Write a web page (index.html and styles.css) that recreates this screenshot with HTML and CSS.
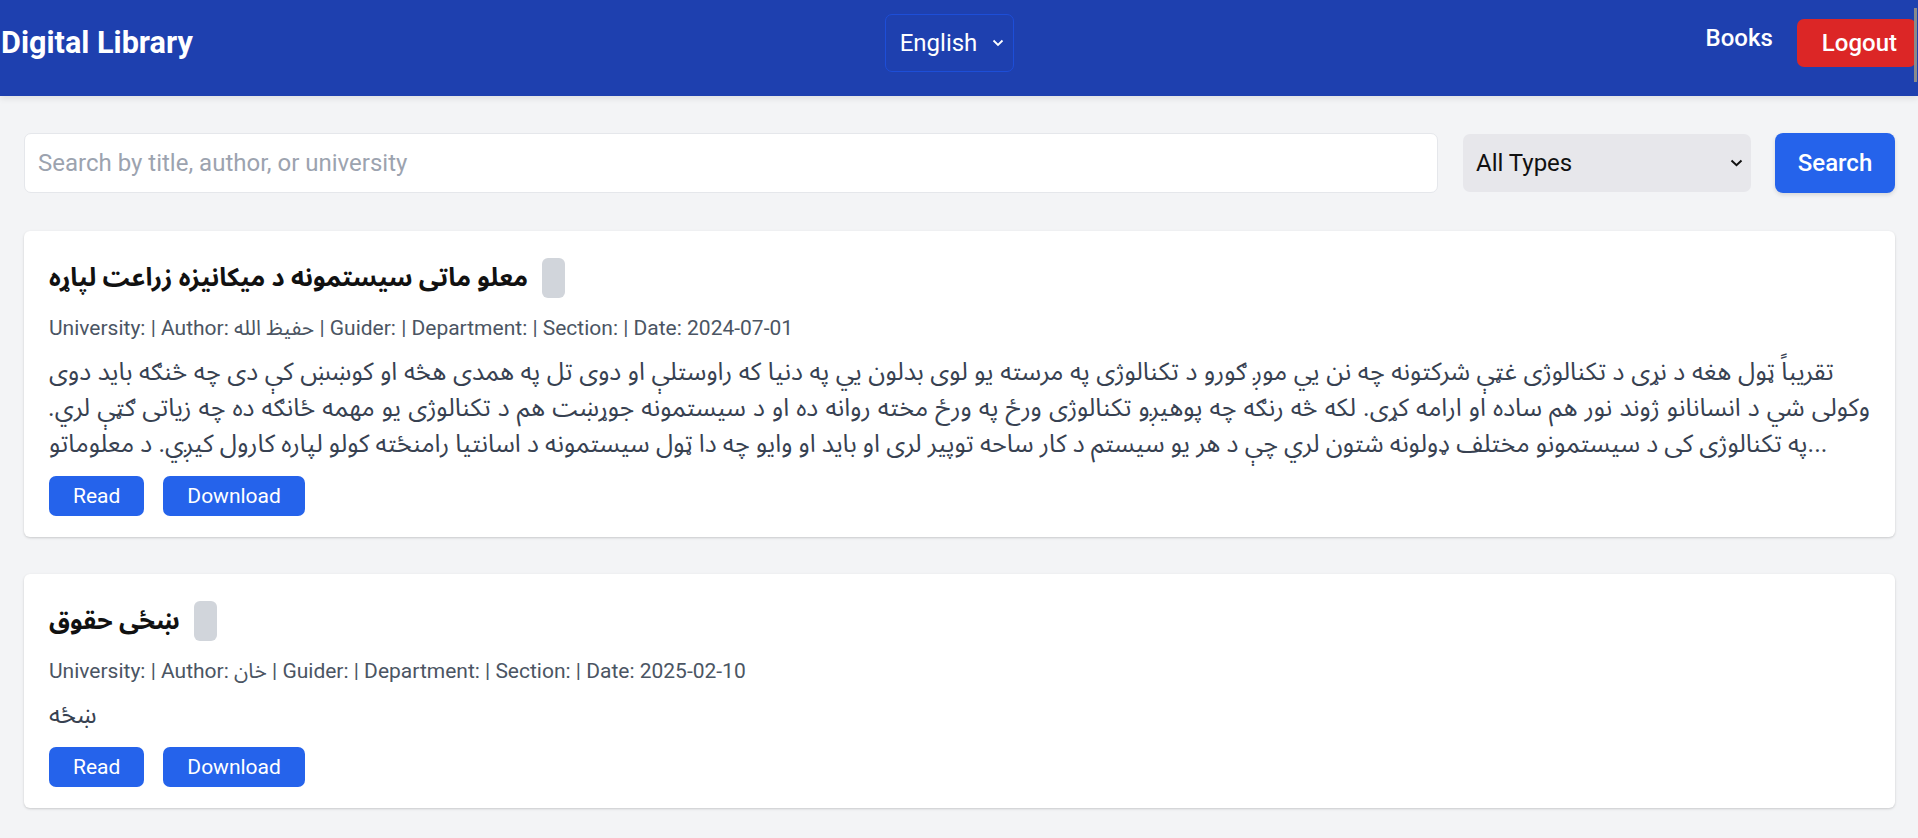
FILE: index.html
```html
<!DOCTYPE html>
<html lang="en">
<head>
<meta charset="utf-8">
<title>Digital Library</title>
<link rel="stylesheet" href="styles.css">
</head>
<body>
<header class="topbar">
  <div class="topbar-inner">
    <h1 class="brand">Digital Library</h1>
    <div class="lang-select">
      <span>English</span>
      <svg class="chev" width="12" height="8" viewBox="0 0 12 8"><path d="M1.5 1.5 L6 6 L10.5 1.5" fill="none" stroke="currentColor" stroke-width="1.8"/></svg>
    </div>
    <nav class="nav">
      <a class="nav-link" href="#">Books</a>
      <button class="btn-logout">Logout</button>
    </nav>
  </div>
  <div class="scroll-thumb"></div>
</header>

<main class="page">
  <form class="search-row">
    <input class="search-input" type="text" placeholder="Search by title, author, or university">
    <div class="type-select">
      <span>All Types</span>
      <svg class="chev" width="13" height="8" viewBox="0 0 13 8"><path d="M1.5 1.5 L6.5 6.2 L11.5 1.5" fill="none" stroke="currentColor" stroke-width="2"/></svg>
    </div>
    <button class="btn-search" type="button">Search</button>
  </form>

  <article class="card">
    <div class="card-title-row">
      <h3 class="card-title">معلو ماتی سیستمونه د میکانیزه زراعت لپاړه</h3>
      <span class="badge"></span>
    </div>
    <p class="meta">University: | Author: حفیظ الله | Guider: | Department: | Section: | Date: 2024-07-01</p>
    <div class="desc">
      <span class="desc-line line-a" dir="rtl">تقریباً ټول هغه د نړی د تکنالوژی غټې شرکتونه چه نن یي موږ ګورو د تکنالوژی په مرسته یو لوی بدلون یي په دنیا که راوستلې او دوی تل په همدی هڅه او کوښښ کې دی چه څنګه باید دوی</span>
      <span class="desc-line line-b" dir="rtl">وکولی شي د انسانانو ژوند نور هم ساده او ارامه کړی. لکه څه رنګه چه پوهیږو تکنالوژی ورځ په ورځ مخته روانه ده او د سیستمونه جوړښت هم د تکنالوژی یو مهمه ځانګه ده چه زیاتی ګټې لري.</span>
      <span class="desc-line" dir="rtl">...په تکنالوژی کی د سیستمونو مختلف ډولونه شتون لري چې د هر یو سیستم د کار ساحه توپیر لری او باید او وایو چه دا ټول سیستمونه د اسانتیا رامنځته کولو لپاره کارول کیږي. د معلوماتو</span>
    </div>
    <div class="actions">
      <button class="btn" type="button">Read</button>
      <button class="btn" type="button">Download</button>
    </div>
  </article>

  <article class="card">
    <div class="card-title-row">
      <h3 class="card-title">ښځی حقوق</h3>
      <span class="badge"></span>
    </div>
    <p class="meta">University: | Author: خان | Guider: | Department: | Section: | Date: 2025-02-10</p>
    <div class="desc">
      <span class="desc-line" dir="rtl">ښځه</span>
    </div>
    <div class="actions">
      <button class="btn" type="button">Read</button>
      <button class="btn" type="button">Download</button>
    </div>
  </article>
</main>
</body>
</html>
```

FILE: styles.css
```css
* { box-sizing: border-box; }

html, body {
  margin: 0;
  padding: 0;
}

body {
  background: #f3f4f6;
  font-family: Roboto, "Noto Sans Arabic", "DejaVu Sans", sans-serif;
  color: #111827;
  overflow: hidden;
}

/* ---------- header ---------- */
.topbar {
  background: #1e40af;
  height: 96px;
  box-shadow: 0 3px 6px rgba(0, 0, 0, 0.08);
  position: relative;
}

.topbar-inner {
  height: 86px;
  display: flex;
  align-items: center;
  justify-content: space-between;
  padding: 0 2px 0 1px;
}

.brand {
  margin: 0;
  color: #ffffff;
  font-size: 30.6px;
  font-weight: 700;
  line-height: 40px;
}

.lang-select {
  width: 129px;
  height: 58px;
  border: 1px solid #1d4ed8;
  border-radius: 7px;
  display: flex;
  align-items: center;
  justify-content: space-between;
  padding: 0 9px 0 14px;
  color: #ffffff;
  font-size: 24px;
}

.chev { display: block; }

.nav {
  display: flex;
  align-items: center;
  gap: 24px;
}

.nav-link {
  color: #ffffff;
  text-decoration: none;
  font-size: 24px;
  font-weight: 500;
  line-height: 36px;
  margin-bottom: 10px;
}

.btn-logout {
  background: #dc2626;
  color: #ffffff;
  border: none;
  border-radius: 7px;
  height: 48px;
  padding: 0 19px 0 25px;
  font-family: inherit;
  font-size: 24px;
  font-weight: 500;
}

.scroll-thumb {
  position: absolute;
  right: 1px;
  top: 8px;
  width: 3px;
  height: 74px;
  background: #8a8a8a;
}

/* ---------- main ---------- */
.page {
  padding: 37px 23px 0 24px;
}

.search-row {
  display: flex;
  align-items: center;
  margin: 0 0 38px;
}

.search-input {
  flex: 1;
  height: 60px;
  border: 1px solid #e5e7eb;
  border-radius: 7px;
  background: #ffffff;
  padding: 0 13px;
  font-family: inherit;
  font-size: 24px;
  color: #111827;
  outline: none;
}

.search-input::placeholder { color: #9ca3af; }

.type-select {
  width: 288px;
  height: 58px;
  margin-left: 25px;
  background: #e7e7eb;
  border-radius: 7px;
  display: flex;
  align-items: center;
  justify-content: space-between;
  padding: 0 8px 0 13px;
  font-size: 24px;
  color: #111111;
}

.btn-search {
  width: 120px;
  height: 60px;
  margin-left: 24px;
  background: #2563eb;
  color: #ffffff;
  border: none;
  border-radius: 8px;
  font-family: inherit;
  font-size: 24px;
  font-weight: 500;
  box-shadow: 0 2px 4px rgba(0, 0, 0, 0.12);
}

/* ---------- cards ---------- */
.card {
  background: #ffffff;
  border-radius: 6px;
  box-shadow: 0 1px 3px rgba(0, 0, 0, 0.12), 0 1px 2px rgba(0, 0, 0, 0.06);
  padding: 27px 25px 21px;
  margin-bottom: 37px;
}

.card-title-row {
  display: flex;
  align-items: center;
  height: 40px;
}

.card-title {
  margin: 0;
  font-size: 25.3px;
  font-weight: 700;
  line-height: 40px;
  color: #111111;
}

.badge {
  width: 23px;
  height: 40px;
  margin-left: 14px;
  background: #d1d5db;
  border-radius: 6px;
}

.meta {
  margin: 15px 0 0;
  font-size: 21px;
  line-height: 30px;
  color: #4b5563;
}

.desc {
  margin-top: 11px;
  font-size: 25px;
  line-height: 36px;
  color: #374151;
}

.desc-line {
  display: block;
  height: 36px;
  text-align: left;
  white-space: nowrap;
}

.line-a { word-spacing: 0.4px; }
.line-b { word-spacing: 0.9px; }

.actions {
  display: flex;
  gap: 19px;
  margin-top: 14px;
}

.btn {
  height: 40px;
  padding: 0 24px;
  background: #2563eb;
  color: #ffffff;
  border: none;
  border-radius: 7px;
  font-family: inherit;
  font-size: 21px;
}
```
